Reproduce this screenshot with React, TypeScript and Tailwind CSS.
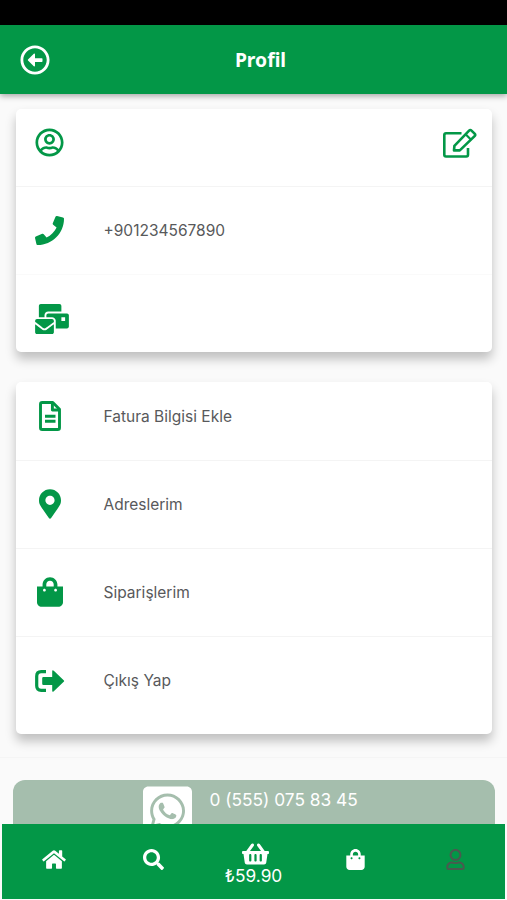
import React from 'react';
import {
  FaHome,
  FaMailBulk,
  FaMapMarkerAlt,
  FaPhone,
  FaRegArrowAltCircleLeft,
  FaRegUser,
  FaRegUserCircle,
  FaSearch,
  FaShoppingBag,
  FaShoppingBasket,
  FaWhatsappSquare,
} from 'react-icons/fa';

interface RowProps {
  icon: React.ReactNode;
  label?: string;
  action?: React.ReactNode;
  className: string;
}

const InvoiceIcon = () => (
  <svg viewBox="0 0 22 30" className="h-[30px] w-[22px]" fill="none" stroke="currentColor" strokeWidth="2.9" strokeLinejoin="round">
    <path d="M3.2 1.5h10.6l6.7 6.7v18.5q0 1.8-1.8 1.8H3.2q-1.7 0-1.7-1.8V3.2q0-1.7 1.7-1.7z" />
    <path d="M13.4 1.8V9h6.8" />
    <path d="M6 15.3h10.5M6 20.3h10.5" />
  </svg>
);

const EditIcon = () => (
  <svg viewBox="0 0 34 30" className="h-[30px] w-[34px] text-[#039747]" fill="none" stroke="currentColor" strokeWidth="2.6" strokeLinejoin="round">
    <path d="M18.5 5.3H3q-1.7 0-1.7 1.7v19.8q0 1.7 1.7 1.7h20.3q1.7 0 1.7-1.7V20" />
    <path d="M11 22.4l.4-4.6L26.1 2.6q1.2-1.2 2.4 0l3.1 3.1q1.2 1.2 0 2.4L16.8 22.4z" />
    <path d="M22.6 6.2l5.5 5.5" strokeWidth="2.2" />
  </svg>
);

const LogoutIcon = () => (
  <svg viewBox="0 0 30 22" className="h-[22px] w-[30px]" fill="currentColor">
    <path d="M11 1.7H6.2Q1.7 1.7 1.7 6.2v9.6q0 4.5 4.5 4.5H11" fill="none" stroke="currentColor" strokeWidth="3.2" strokeLinejoin="round" />
    <path d="M8.4 7h8.8V1.4q0-2 1.6-.6l9.9 9.4q.9.8 0 1.6l-9.9 9.4q-1.6 1.4-1.6-.6V15H8.4q-1.2 0-1.2-1.2V8.2Q7.2 7 8.4 7z" />
  </svg>
);

const Row: React.FC<RowProps> = ({ icon, label, action, className }) => (
  <div className={`flex items-center pr-[15px] pl-[19px] ${className}`}>
    <div className="w-[69px] shrink-0 pb-px text-[#039747]">{icon}</div>
    <span className="flex-1 text-[15.5px] leading-6 text-[#58595b]">{label}</span>
    {action}
  </div>
);

const cardClass =
  'mx-auto w-[476px] rounded-[5px] bg-white shadow-[0_7px_11px_rgba(0,0,0,0.24)]';

export default function App() {
  return (
    <div className="flex h-[900px] w-[507px] flex-col overflow-hidden bg-[#fafafa] font-['Inter',sans-serif]">
      <div className="h-[25px] shrink-0 bg-black" />
      <header className="z-10 grid h-[69px] shrink-0 grid-cols-3 items-center bg-[#039747] px-5 text-white shadow-[0_2px_6px_rgba(0,0,0,0.35)]">
        <FaRegArrowAltCircleLeft className="size-[30px]" />
        <h1 className="pt-px pl-3.5 text-center font-['Noto_Sans',sans-serif] text-[19.3px] font-bold">Profil</h1>
      </header>

      <main className="flex h-[664px] shrink-0 flex-col gap-[30px] border-b border-[#f5f5f5] pt-[15px]">
        <section className={`${cardClass} h-[243px] shrink-0`}>
          <Row
            className="h-[78px] border-b border-[#f4f4f4] pb-[9px]"
            icon={<FaRegUserCircle className="size-[29px]" />}
            action={<EditIcon />}
          />
          <Row
            className="h-[88px] border-b border-[#fafafa]"
            icon={<FaPhone className="size-[29px]" />}
            label="+901234567890"
          />
          <Row className="h-[88px]" icon={<FaMailBulk className="h-[30px] w-[34px]" />} />
        </section>

        <section className={`${cardClass} h-[352px] shrink-0`}>
          <Row
            className="h-[79px] border-b border-[#f4f4f4] pb-[9px]"
            icon={<div className="ml-1"><InvoiceIcon /></div>}
            label="Fatura Bilgisi Ekle"
          />
          <Row
            className="h-[88px] border-b border-[#f4f4f4]"
            icon={<FaMapMarkerAlt className="ml-1 h-[30px] w-[22px]" />}
            label="Adreslerim"
          />
          <Row
            className="h-[88px] border-b border-[#f4f4f4]"
            icon={<FaShoppingBag className="ml-0.5 h-[30px] w-[26px]" />}
            label="Siparişlerim"
          />
          <Row className="h-[88px]" icon={<LogoutIcon />} label="Çıkış Yap" />
        </section>
      </main>

      <div className="mx-auto mt-[22px] flex h-[44px] w-[482px] shrink-0 overflow-hidden rounded-t-xl bg-[#a5bead] pl-[130px] text-white">
        <FaWhatsappSquare className="mt-[3px] h-[56px] w-[49px] shrink-0" />
        <span className="mt-2 ml-[18px] text-[17.3px] leading-6">0 (555) 075 83 45</span>
      </div>

      <nav className="mx-auto grid h-[75px] w-[503px] shrink-0 grid-cols-5 items-center justify-items-center bg-[#039747] pb-1 text-white">
        <FaHome className="ml-1 h-[21px] w-[24px]" />
        <FaSearch className="ml-0.5 size-[21px]" />
        <div className="flex flex-col items-center pt-2">
          <FaShoppingBasket className="ml-1 h-[24px] w-[27px]" />
          <span className="text-[17.3px] leading-5">₺59.90</span>
        </div>
        <FaShoppingBag className="ml-0.5 h-[21px] w-[19px]" />
        <FaRegUser className="ml-0.5 h-[21px] w-[19px] text-[#4a5a4f]" />
      </nav>
    </div>
  );
}
